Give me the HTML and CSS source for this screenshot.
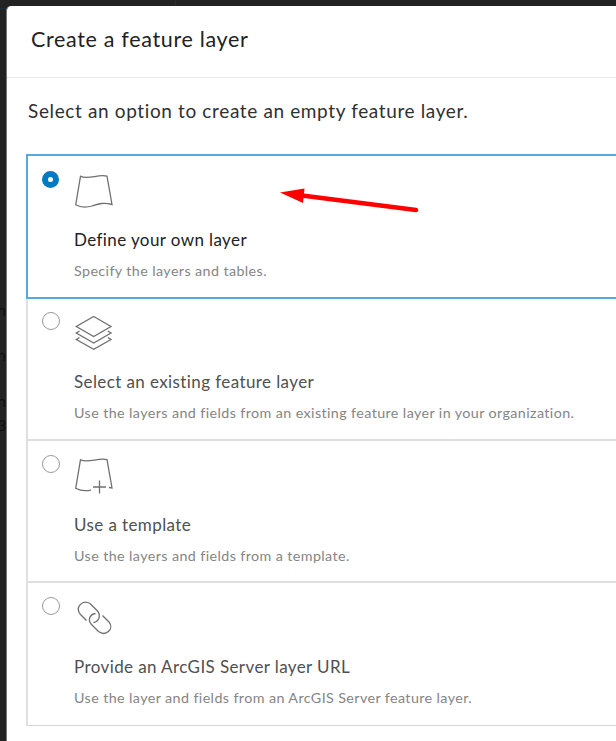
FILE: index.html
```html
<!DOCTYPE html>
<html lang="en">
<head>
<meta charset="utf-8">
<title>Create a feature layer</title>
<link rel="stylesheet" href="styles.css">
</head>
<body>
<div class="backdrop" aria-hidden="true">
  <span class="rule rule-left"></span><span class="rule rule-top"></span>
  <span class="ghost ghost-a">n</span><span class="ghost ghost-b">n</span><span class="ghost ghost-c">n</span><span class="ghost ghost-d">3</span>
</div>
<main class="dialog">
  <header class="dialog-header"><h1>Create a feature layer</h1></header>
  <section class="dialog-body">
    <h2>Select an option to create an empty feature layer.</h2>
    <div class="options">
      <label class="option selected">
        <span class="radio"></span>
        <span class="content">
          <svg class="icon" viewBox="0 0 40 40"><path d="M6.500 4.200C14 8.200 25 1.500 33 4.200L38 32.500C29 30 24 32 18 34C12 35.800 6 35.200 1.700 32.800Z"/></svg>
          <span class="name">Define your own layer</span>
          <span class="description">Specify the layers and tables.</span>
        </span>
        <svg class="arrow" viewBox="0 0 140 30"><path class="shaft" d="M22 8.500L136 23"/><path class="head" d="M0 5.500L24.500 1.500L23 16Z"/></svg>
      </label>
      <label class="option">
        <span class="radio"></span>
        <span class="content">
          <svg class="icon" viewBox="0 0 40 40"><path d="M19.700 3.500L37 13.500L19.700 23.500L2.300 13.500ZM5.500 18L2.300 20L19.700 30L37 20L33.800 18M5.500 24.500L2.300 26.500L19.700 36.300L37 26.500L33.800 24.500"/></svg>
          <span class="name">Select an existing feature layer</span>
          <span class="description">Use the layers and fields from an existing feature layer in your organization.</span>
        </span>
      </label>
      <label class="option lower">
        <span class="radio"></span>
        <span class="content">
          <svg class="icon" viewBox="0 0 40 40"><path d="M17 34.200C11 35.300 6 34.700 1.700 32.300L6.500 3.700C14 7.700 25 1 33 3.700L38 32L35 31.500M25.500 24.500V37.500M19 31H32"/></svg>
          <span class="name">Use a template</span>
          <span class="description">Use the layers and fields from a template.</span>
        </span>
      </label>
      <label class="option lower last">
        <span class="radio"></span>
        <span class="content">
          <svg class="icon" viewBox="0 0 40 40"><path d="M12.500 22.500L6.500 16.500C.5 9.500 8.500 1 16 5.500L23 12.500C27.300 17 25.300 23.500 19.500 24.500M21.500 15.500C15.500 16.500 13.500 22 17.500 26.500L24.500 33.500C32 39 40.500 30.500 35 24L28.500 17.500"/></svg>
          <span class="name">Provide an ArcGIS Server layer URL</span>
          <span class="description">Use the layer and fields from an ArcGIS Server feature layer.</span>
        </span>
      </label>
    </div>
  </section>
</main>
</body>
</html>
```

FILE: styles.css
```css
* { box-sizing: border-box; }
body { margin: 0; height: 741px; padding: 6px 0 0 6px; overflow: hidden; background: #232323; font-family: Lato, sans-serif; }
.dialog { position: relative; height: 735px; background: #fff; border-left: 1px solid #777; border-top-left-radius: 5px; }
.dialog-header { height: 72px; padding: 19px 0 0 24px; border-bottom: 1px solid #e8e8e8; }
h1, h2 { margin: 0; font-weight: 400; white-space: nowrap; }
h1 { color: #222; font-size: 21.500px; line-height: 28px; letter-spacing: .67px; }
.dialog-body { padding: 19px 0 0 19px; }
h2 { height: 57px; padding-left: 2px; color: #303030; font-size: 19px; line-height: 28px; letter-spacing: .63px; }
.options { width: 620px; }
.option { position: relative; display: flex; height: 142px; border-left: 2px solid #e0e0e0; border-bottom: 2px solid #dedede; padding: 13px 0 0 14px; }
.option.selected { height: 145px; padding-top: 15px; border: 2px solid #56aadd; }
.option.lower { padding-top: 14px; }
.option.last { height: 143px; border-bottom: 1px solid #d5d5d5; }
.radio { flex: none; width: 18px; height: 18px; border: 1.500px solid #999; border-radius: 50%; background: #fff; }
.selected .radio { width: 17px; height: 17px; margin-right: 1px; border: 6px solid #007ac2; }
.content { display: flex; flex-direction: column; margin-left: 14px; }
.icon { width: 40px; height: 40px; margin-top: 1px; fill: none; stroke: #707070; stroke-width: 1.300; }
.name { margin-top: 18px; color: #505050; font-size: 17px; line-height: 22px; letter-spacing: .4px; white-space: nowrap; }
.selected .name { margin-top: 17px; color: #222; }
.description { margin-top: 10px; color: #858585; font-size: 14.300px; line-height: 20px; letter-spacing: .4px; white-space: nowrap; }
.arrow { position: absolute; left: 252px; top: 31px; width: 140px; height: 30px; }
.shaft { fill: none; stroke: #f00; stroke-width: 4.500; stroke-linecap: round; }
.head { fill: #f00; }
.rule, .ghost { position: absolute; }
.rule-left { left: 0; top: 8px; width: 6px; height: 1px; background: #163241; }
.rule-top { left: 175px; top: 0; width: 1px; height: 6px; background: #163241; }
.ghost { left: -3px; color: #101010; font-size: 16px; line-height: 20px; }
.ghost-a { top: 300px; }
.ghost-b { top: 345px; }
.ghost-c { top: 391px; }
.ghost-d { top: 415px; }
```
